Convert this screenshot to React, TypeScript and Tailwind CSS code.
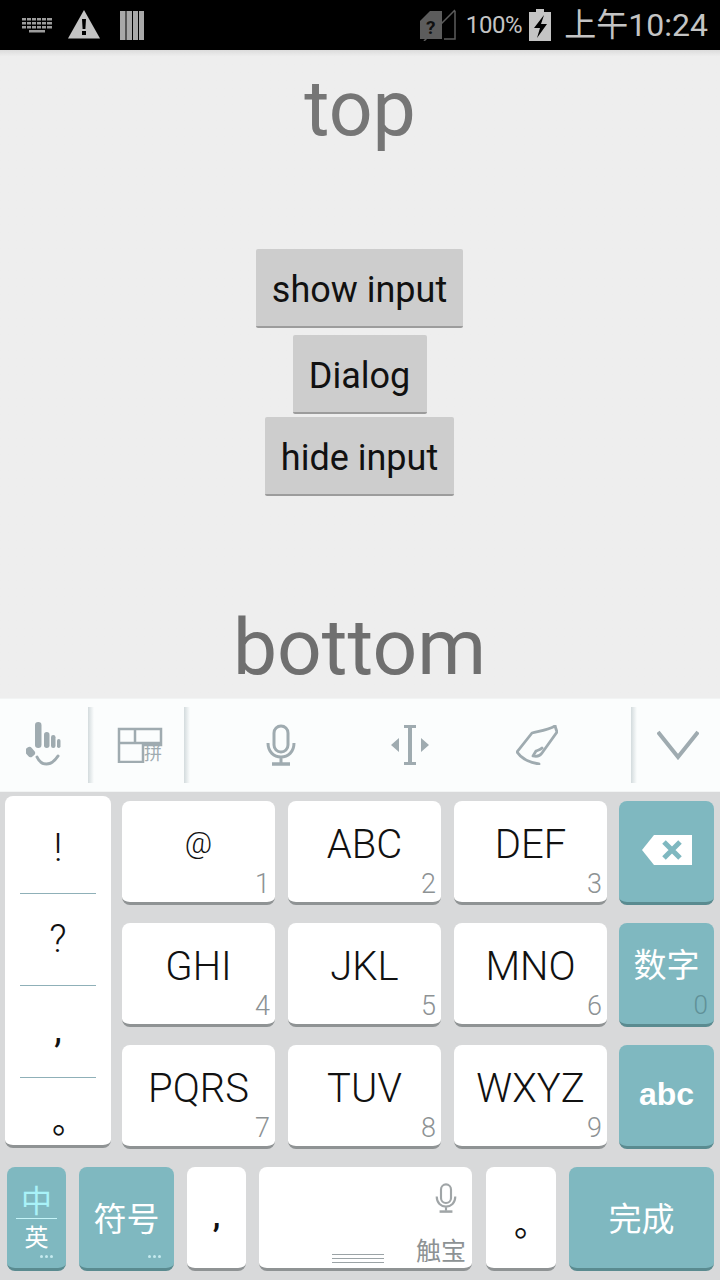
const sans = "font-['Roboto','Noto_Sans_CJK_SC',sans-serif]";

function SmallMic({ className }: { className: string }) {
  return (
    <svg viewBox="0 0 32 42" className={className} fill="none" stroke="currentColor" strokeWidth="3">
      <rect x="9" y="2" width="14" height="26" rx="7" />
      <path d="M3 19c0 9 6 14 13 14s13-5 13-14M16 33v6" />
      <path d="M7 40h18" strokeWidth="3.5" />
    </svg>
  );
}

function StatusBar() {
  return (
    <div className="flex h-[50px] items-center bg-black pl-[22px] pr-[12px] text-[#c4c4c4]">
      <svg viewBox="0 0 30 16" className="h-[16px] w-[30px] opacity-80" fill="currentColor">
        <path d="M0 1h4v2.500H0zM5 1h4v2.500H5zM10 1h4v2.500h-4zM15 1h4v2.500h-4zM20 1h4v2.500h-4zM25 1h5v2.500h-5zM0 5h4v2.500H0zM5 5h4v2.500H5zM10 5h4v2.500h-4zM15 5h4v2.500h-4zM20 5h4v2.500h-4zM25 5h5v2.500h-5zM0 9h4v2.500H0zM5 9h4v2.500H5zM10 9h4v2.500h-4zM15 9h4v2.500h-4zM20 9h4v2.500h-4zM25 9h5v2.500h-5zM7 13h16v2.500H7z" />
      </svg>
      <svg viewBox="0 0 32 30" className="ml-[16px] h-[30px] w-[32px]">
        <path d="M16 0 32 28.500H0Z" fill="currentColor" />
        <path d="M14 9h4l-.6 10h-2.800zM14 21h4v4h-4z" fill="#000" />
      </svg>
      <svg viewBox="0 0 24 30" className="ml-[20px] h-[30px] w-[24px]" fill="#a8a8a8">
        <path d="M0 1h5.500v29H0zM6.500 1H12v29H6.500zM13 1h5v29h-5zM19 1h5v29h-5z" />
      </svg>
      <svg viewBox="0 0 36 32" className="ml-auto h-[32px] w-[36px]">
        <path d="M0 12 10 2h12v28H0Z" fill="#5c5c5c" />
        <path d="M35 1 4 32M24 30h11V2" stroke="#5c5c5c" strokeWidth="1.500" fill="none" />
        <text x="6" y="25" fontSize="19" fontWeight="700" fontFamily="Roboto" fill="#111">?</text>
      </svg>
      <span className={`ml-[10px] text-[24px] leading-none tracking-[-0.4px] ${sans}`}>100%</span>
      <svg viewBox="0 0 22 32" className="ml-[7px] h-[32px] w-[22px]">
        <path d="M7 0h8v3h7v29H0V3h7Z" fill="currentColor" />
        <path d="M15 6 5 19h6l-3 10 10-14h-6l3-9Z" fill="#000" />
      </svg>
      <span className={`ml-[13px] whitespace-nowrap text-[32px] leading-none ${sans}`}>上午10:24</span>
    </div>
  );
}

function DemoButton({ label, className }: { label: string; className: string }) {
  return (
    <div className={`mr-[1px] flex h-[79px] items-center justify-center rounded-[2px] border-b-2 border-[#9c9c9c] bg-[#cdcdcd] pt-[4px] text-[36px] leading-none text-[#111] ${className}`}>
      {label}
    </div>
  );
}

function Divider({ className }: { className: string }) {
  return <div className={`h-[76px] w-[6px] bg-gradient-to-r from-[#d3dbdd] to-transparent ${className}`} />;
}

function Toolbar() {
  return (
    <div className="flex h-[94px] items-center border-y border-[#f2f4f4] bg-[#fbfdfd] text-[#9fabb0]">
      <svg viewBox="0 0 36 46" className="ml-[26px] h-[46px] w-[36px]" fill="currentColor">
        <rect x="9" y="0" width="6.500" height="26" rx="3.200" />
        <rect x="18" y="10" width="5.500" height="16" rx="2.700" />
        <rect x="25" y="13" width="4.500" height="13" rx="2.200" />
        <rect x="31" y="17" width="3.500" height="9" rx="1.700" />
        <rect x="0" y="25" width="8" height="10" rx="3" transform="rotate(-40 4 30)" />
        <path d="M11 35c4 9 14 10 21-1" fill="none" stroke="currentColor" strokeWidth="3" strokeLinecap="round" />
      </svg>
      <Divider className="ml-[26px]" />
      <svg viewBox="0 0 46 36" className="ml-[23px] h-[36px] w-[46px]" fill="none" stroke="currentColor" strokeWidth="2.500">
        <path d="M26 35H2V2h42v16H26zM2 16h42M18 2v14" />
      </svg>
      <span className={`-ml-[19px] mt-[18px] w-[19px] text-[18px] leading-none text-[#9fabb0] ${sans}`}>拼</span>
      <Divider className="ml-[21px]" />
      <SmallMic className="ml-[75px] h-[42px] w-[32px]" />
      <svg viewBox="0 0 38 40" className="ml-[94px] h-[40px] w-[38px]" fill="currentColor">
        <path d="M13 0h12v3h-4v34h4v3H13v-3h4V3h-4zM8 13v14L0 20zM30 13v14l8-7z" />
      </svg>
      <svg viewBox="0 0 42 40" className="ml-[87px] h-[40px] w-[42px]" fill="none" stroke="currentColor" strokeWidth="2.800" strokeLinejoin="round" strokeLinecap="round">
        <path d="M39 1c-7 4-15 5-23 7L1 27c4 6 10 10 22 12" />
        <path d="M39 1l2 6-15 21c-2 3-5 4-9 3l3-5c2-1 4-1 6-3" />
      </svg>
      <Divider className="ml-[73px]" />
      <svg viewBox="0 0 42 30" className="ml-[20px] h-[30px] w-[42px]" fill="none" stroke="currentColor" strokeWidth="4">
        <path d="M1 2 21 27 41 2" />
      </svg>
    </div>
  );
}

function LetterKey({ label, digit, small }: { label: string; digit: string; small?: boolean }) {
  return (
    <div className="relative h-[104px] w-[153px] rounded-[8px] border-b-[3px] border-[#8f9394] bg-white">
      <div className={`text-center leading-[44px] text-[#111] font-light ${small ? "pt-[20px] text-[30px]" : "pt-[22px] text-[40px]"}`}>{label}</div>
      <span className="absolute bottom-[4px] right-[5px] text-[27px] font-light leading-none text-[#8d9294]">{digit}</span>
    </div>
  );
}

function TealKey({ className, children }: { className: string; children: React.ReactNode }) {
  return (
    <div className={`relative rounded-[8px] border-b-[3px] border-[#5a8b90] bg-[#7fb8c0] text-white ${className}`}>
      {children}
    </div>
  );
}

function Dots() {
  return (
    <div className="absolute bottom-[10px] right-[13px] flex gap-[2px]">
      <span className="size-[3px] rounded-full bg-[#c5e9ee]" />
      <span className="size-[3px] rounded-full bg-[#c5e9ee]" />
      <span className="size-[3px] rounded-full bg-[#c5e9ee]" />
    </div>
  );
}

function PlainKey({ className, children }: { className: string; children: React.ReactNode }) {
  return (
    <div className={`relative h-[104px] rounded-[8px] border-b-[3px] border-[#8f9394] bg-white ${className}`}>
      {children}
    </div>
  );
}

function Keyboard() {
  const rows = [
    [["@", "1"], ["ABC", "2"], ["DEF", "3"]],
    [["GHI", "4"], ["JKL", "5"], ["MNO", "6"]],
    [["PQRS", "7"], ["TUV", "8"], ["WXYZ", "9"]],
  ];

  return (
    <div className="h-[488px] bg-[#d8d9da]">
      <div className="flex pl-[5px] pt-[4px]">
        <div className="h-[352px] w-[106px] rounded-[8px] border-b-[3px] border-[#8f9394] bg-white px-[15px] text-center text-[#111]">
          <div className="h-[98px] border-b border-[#8fb0b8] pt-[33px] text-[38px] font-light leading-none">!</div>
          <div className="h-[92px] border-b border-[#8fb0b8] pt-[26px] text-[38px] font-light leading-none">?</div>
          <div className="h-[92px] border-b border-[#8fb0b8] pt-[24px] text-[38px] leading-none">,</div>
          <div className={`pl-[22px] pt-[26px] text-[34px] leading-none ${sans}`}>。</div>
        </div>
        <div className="ml-[11px] flex flex-col gap-[18px] pt-[5px]">
          {rows.map((row, i) => (
            <div key={i} className="flex gap-[13px]">
              {row.map(([label, digit]) => (
                <LetterKey key={digit} label={label} digit={digit} small={label === "@"} />
              ))}
              <TealKey className="ml-[-1px] h-[104px] w-[95px]">
                {i === 0 && (
                  <svg viewBox="0 0 50 30" className="mx-auto mt-[34px] h-[30px] w-[50px]">
                    <path d="M12 0h38v30H12L0 15Z" fill="#fff" />
                    <path d="m22 7 16 16m0-16L22 23" stroke="#7fb8c0" strokeWidth="5" />
                  </svg>
                )}
                {i === 1 && (
                  <>
                    <div className={`pt-[23px] text-center text-[33px] leading-[40px] ${sans}`}>数字</div>
                    <span className="absolute bottom-[6px] right-[6px] text-[26px] font-light leading-none text-[#5f9198]">0</span>
                  </>
                )}
                {i === 2 && <div className="pt-[29px] text-center font-['Liberation_Sans',sans-serif] text-[32px] font-bold leading-[40px]">abc</div>}
              </TealKey>
            </div>
          ))}
        </div>
      </div>
      <div className={`ml-[7px] mt-[18px] flex ${sans}`}>
        <TealKey className="h-[104px] w-[59px] text-center">
          <div className="mx-[9px] h-[52px] border-b border-[#c5f4f8] pt-[19px] text-[31px] leading-none text-[#a9f2f8]">中</div>
          <div className="pt-[7px] text-[24px] leading-none">英</div>
          <Dots />
        </TealKey>
        <TealKey className="ml-[13px] h-[104px] w-[95px]">
          <div className="pt-[34px] text-center text-[33px] leading-[38px]">符号</div>
          <Dots />
        </TealKey>
        <PlainKey className="ml-[13px] w-[59px] pt-[34px] text-center text-[31px] font-bold leading-none text-[#111]">,</PlainKey>
        <PlainKey className="ml-[13px] w-[213px]">
          <SmallMic className="absolute right-[14px] top-[16px] h-[30px] w-[24px] text-[#a0a5a7]" />
          <div className="absolute bottom-[5px] left-[73px] w-[52px] border-y border-[#9ba3a6] py-[3px]">
            <div className="border-t border-[#9ba3a6]" />
          </div>
          <span className="absolute bottom-[4px] right-[6px] text-[25px] leading-none text-[#8d9294]">触宝</span>
        </PlainKey>
        <PlainKey className="ml-[14px] w-[70px] pl-[20px] pt-[40px] text-center text-[34px] leading-none text-[#111]">。</PlainKey>
        <TealKey className="ml-[13px] h-[104px] w-[145px]">
          <div className="pt-[34px] text-center text-[33px] leading-[38px]">完成</div>
        </TealKey>
      </div>
    </div>
  );
}

export default function App() {
  return (
    <div className={`flex h-[1280px] w-[720px] flex-col overflow-hidden bg-[#eeeeee] ${sans}`}>
      <StatusBar />
      <main className="flex h-[648px] flex-col items-center bg-gradient-to-b from-[#dcdcdc] from-0% to-[#eeeeee] to-[1%]">
        <div className="mt-[14px] h-[185px] text-[77px] leading-[90px] text-[#767676]">top</div>
        <DemoButton label="show input" className="w-[207px]" />
        <DemoButton label="Dialog" className="mt-[7px] w-[134px]" />
        <DemoButton label="hide input" className="mt-[3px] w-[189px]" />
        <div className="mr-[1px] mt-[106px] text-[78.5px] leading-[90px] text-[#6f6f6f]">bottom</div>
      </main>
      <Toolbar />
      <Keyboard />
    </div>
  );
}
